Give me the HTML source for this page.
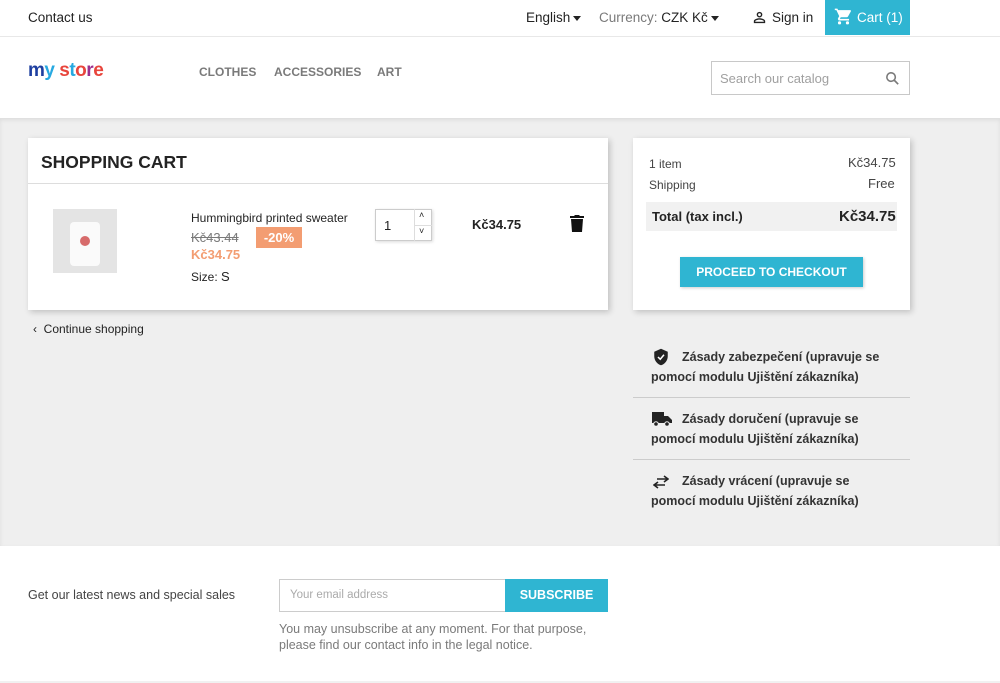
<!DOCTYPE html>
<html><head><meta charset="utf-8"><style>
*{margin:0;padding:0;box-sizing:border-box}
body{width:1000px;height:683px;position:relative;background:#fff;font-family:"Liberation Sans",sans-serif;color:#232323;overflow:hidden;font-size:13px}
.a{position:absolute;white-space:nowrap}
.b{font-weight:bold}
.car{display:inline-block;width:0;height:0;border-left:4px solid transparent;border-right:4px solid transparent;border-top:5px solid #232323;vertical-align:middle;margin-left:3px}
</style></head><body>
<div class="a" style="left:0;top:36px;width:1000px;height:1px;background:#e8e8e8"></div>
<div class="a" style="left:28px;top:10px;font-size:13.5px">Contact us</div>
<div class="a" style="left:526px;top:10px;font-size:13.5px">English<span class="car"></span></div>
<div class="a" style="left:599px;top:10px;font-size:13.5px"><span style="color:#7a7a7a">Currency:</span> CZK Kč<span class="car"></span></div>
<svg class="a" style="left:751px;top:9px" width="17" height="17" viewBox="0 0 24 24"><path fill="#232323" d="M12 6a2 2 0 110 4 2 2 0 010-4m0 9c2.7 0 5.8 1.3 6 2v1H6v-1c.2-.7 3.3-2 6-2m0-11a4 4 0 100 8 4 4 0 000-8zm0 9c-2.7 0-8 1.3-8 4v3h16v-3c0-2.7-5.3-4-8-4z"/></svg>
<div class="a" style="left:772px;top:10px;font-size:13.5px">Sign in</div>
<div class="a" style="left:825px;top:0;width:85px;height:35px;background:#2fb5d2"></div>
<svg class="a" style="left:834px;top:7px" width="19" height="19" viewBox="0 0 24 24"><path fill="#fff" d="M7 18a2 2 0 100 4 2 2 0 000-4zM1 2v2h2l3.6 7.6-1.4 2.4A2 2 0 007 17h12v-2H7.4l1.1-2h7.5a2 2 0 001.7-1l3.6-6.5A1 1 0 0020.4 4H5.2l-.9-2H1zm16 16a2 2 0 100 4 2 2 0 000-4z"/></svg>
<div class="a" style="left:857px;top:10px;font-size:13.5px;color:#fff">Cart (1)</div>
<div class="a b" style="left:28px;top:60px;font-size:19px;letter-spacing:-0.5px"><span style="color:#1e3fa0">m</span><span style="color:#27a9e1">y</span> <span style="color:#e8453c">s</span><span style="color:#27a9e1">t</span><span style="color:#e8453c">o</span><span style="color:#9b2f8e">r</span><span style="color:#e8453c">e</span></div>
<div class="a b" style="left:199px;top:65px;font-size:12px;color:#7a7a7a">CLOTHES</div>
<div class="a b" style="left:274px;top:65px;font-size:12px;color:#7a7a7a">ACCESSORIES</div>
<div class="a b" style="left:377px;top:65px;font-size:12px;color:#7a7a7a">ART</div>
<div class="a" style="left:711px;top:61px;width:199px;height:34px;border:1px solid #c8c8c8;background:#fff"></div>
<div class="a" style="left:720px;top:71px;font-size:13px;color:#a0a0a0">Search our catalog</div>
<svg class="a" style="left:884px;top:70px" width="17" height="17" viewBox="0 0 24 24"><circle cx="10" cy="10" r="6" stroke="#7a7a7a" stroke-width="2.2" fill="none"/><path d="M14.5 14.5L20 20" stroke="#7a7a7a" stroke-width="2.4"/></svg>
<div class="a" style="left:0;top:118px;width:1000px;height:428px;background:#efefef;box-shadow:inset 0 2px 4px rgba(0,0,0,.08)"></div>
<div class="a" style="left:28px;top:138px;width:580px;height:172px;background:#fff;box-shadow:2px 2px 6px rgba(0,0,0,.2)"></div>
<div class="a b" style="left:41px;top:152px;font-size:17.5px">SHOPPING CART</div>
<div class="a" style="left:28px;top:183px;width:580px;height:1px;background:#ddd"></div>
<div class="a" style="left:53px;top:209px;width:64px;height:64px;background:#e4e4e4"></div>
<div class="a" style="left:70px;top:222px;width:30px;height:44px;background:#fafafa;border-radius:4px"></div>
<div class="a" style="left:80px;top:236px;width:10px;height:10px;background:#d76b6b;border-radius:50%"></div>
<div class="a" style="left:191px;top:211px;font-size:12px">Hummingbird printed sweater</div>
<div class="a" style="left:191px;top:230px;font-size:13px;color:#7a7a7a;text-decoration:line-through">Kč43.44</div>
<div class="a b" style="left:256px;top:227px;width:46px;height:21px;background:#f39d72;color:#fff;font-size:13px;text-align:center;line-height:21px">-20%</div>
<div class="a b" style="left:191px;top:247px;font-size:13px;color:#f39d72">Kč34.75</div>
<div class="a" style="left:191px;top:269px;font-size:12px">Size: <span style="font-size:13px">S</span></div>
<div class="a" style="left:375px;top:209px;width:57px;height:32px;border:1px solid #ccc;background:#fff;box-shadow:1px 1px 3px rgba(0,0,0,.15)"></div>
<div class="a" style="left:414px;top:209px;width:1px;height:32px;background:#ddd"></div>
<div class="a" style="left:414px;top:225px;width:18px;height:1px;background:#ddd"></div>
<div class="a" style="left:384px;top:218px;font-size:13px">1</div>
<div class="a" style="left:419px;top:210px;font-size:9px">˄</div>
<div class="a" style="left:419px;top:226px;font-size:9px">˅</div>
<div class="a b" style="left:472px;top:217px;font-size:13px">Kč34.75</div>
<svg class="a" style="left:570px;top:214px" width="14" height="18" viewBox="0 0 14 18"><path fill="#111" d="M1 5h12l-1 13H2zM0 2h4l1-1h4l1 1h4v2H0z"/></svg>
<div class="a" style="left:33px;top:322px;font-size:12px">‹&nbsp; Continue shopping</div>
<div class="a" style="left:633px;top:138px;width:277px;height:172px;background:#fff;box-shadow:2px 2px 6px rgba(0,0,0,.2)"></div>
<div class="a" style="left:649px;top:157px;font-size:12px;color:#444">1 item</div>
<div class="a" style="left:848px;top:155px;font-size:13px;color:#444">Kč34.75</div>
<div class="a" style="left:649px;top:178px;font-size:12px;color:#444">Shipping</div>
<div class="a" style="left:868px;top:176px;font-size:13px;color:#444">Free</div>
<div class="a" style="left:646px;top:202px;width:251px;height:29px;background:#f1f1f1"></div>
<div class="a b" style="left:652px;top:209px;font-size:13px">Total (tax incl.)</div>
<div class="a b" style="left:839px;top:208px;font-size:15px">Kč34.75</div>
<div class="a b" style="left:680px;top:257px;width:183px;height:30px;background:#2fb5d2;color:#fff;font-size:12px;text-align:center;line-height:30px;box-shadow:1px 1px 3px rgba(0,0,0,.2)">PROCEED TO CHECKOUT</div>
<svg class="a" style="left:652px;top:348px" width="18" height="18" viewBox="0 0 24 24"><path fill="#232323" d="M12 1L3 5v6c0 5.5 3.8 10.7 9 12 5.2-1.3 9-6.5 9-12V5z"/><path d="M8 12l3 3 5-6" stroke="#fff" stroke-width="2" fill="none"/></svg>
<div class="a b" style="left:682px;top:350px;font-size:12.5px;color:#333">Zásady zabezpečení (upravuje se</div>
<div class="a b" style="left:651px;top:370px;font-size:12.5px;color:#333">pomocí modulu Ujištění zákazníka)</div>
<div class="a" style="left:633px;top:397px;width:277px;height:1px;background:#ccc"></div>
<svg class="a" style="left:652px;top:412px" width="20" height="15" viewBox="0 0 20 15"><path fill="#232323" d="M0 0h12v11H0zM12 4h4l4 4v3h-8z"/><circle cx="4" cy="12" r="2.3" fill="#232323" stroke="#f1f1f1"/><circle cx="15" cy="12" r="2.3" fill="#232323" stroke="#f1f1f1"/></svg>
<div class="a b" style="left:682px;top:412px;font-size:12.5px;color:#333">Zásady doručení (upravuje se</div>
<div class="a b" style="left:651px;top:432px;font-size:12.5px;color:#333">pomocí modulu Ujištění zákazníka)</div>
<div class="a" style="left:633px;top:459px;width:277px;height:1px;background:#ccc"></div>
<svg class="a" style="left:653px;top:475px" width="16" height="14" viewBox="0 0 16 14"><path d="M4 4h11M11 1l4 3-4 3M12 10H1M5 7l-4 3 4 3" stroke="#232323" stroke-width="1.6" fill="none"/></svg>
<div class="a b" style="left:682px;top:474px;font-size:12.5px;color:#333">Zásady vrácení (upravuje se</div>
<div class="a b" style="left:651px;top:494px;font-size:12.5px;color:#333">pomocí modulu Ujištění zákazníka)</div>
<div class="a" style="left:28px;top:588px;font-size:12.5px;color:#444">Get our latest news and special sales</div>
<div class="a" style="left:279px;top:579px;width:227px;height:33px;border:1px solid #ccc;background:#fff"></div>
<div class="a" style="left:290px;top:589px;font-size:11.5px;color:#aaa">Your email address</div>
<div class="a b" style="left:505px;top:579px;width:103px;height:33px;background:#2fb5d2;color:#fff;font-size:12.5px;text-align:center;line-height:33px">SUBSCRIBE</div>
<div class="a" style="left:279px;top:621px;font-size:12.5px;color:#7a7a7a;line-height:16px">You may unsubscribe at any moment. For that purpose,<br>please find our contact info in the legal notice.</div>
<div class="a" style="left:0;top:681px;width:1000px;height:2px;background:#f1f1f1"></div>
</body></html>
